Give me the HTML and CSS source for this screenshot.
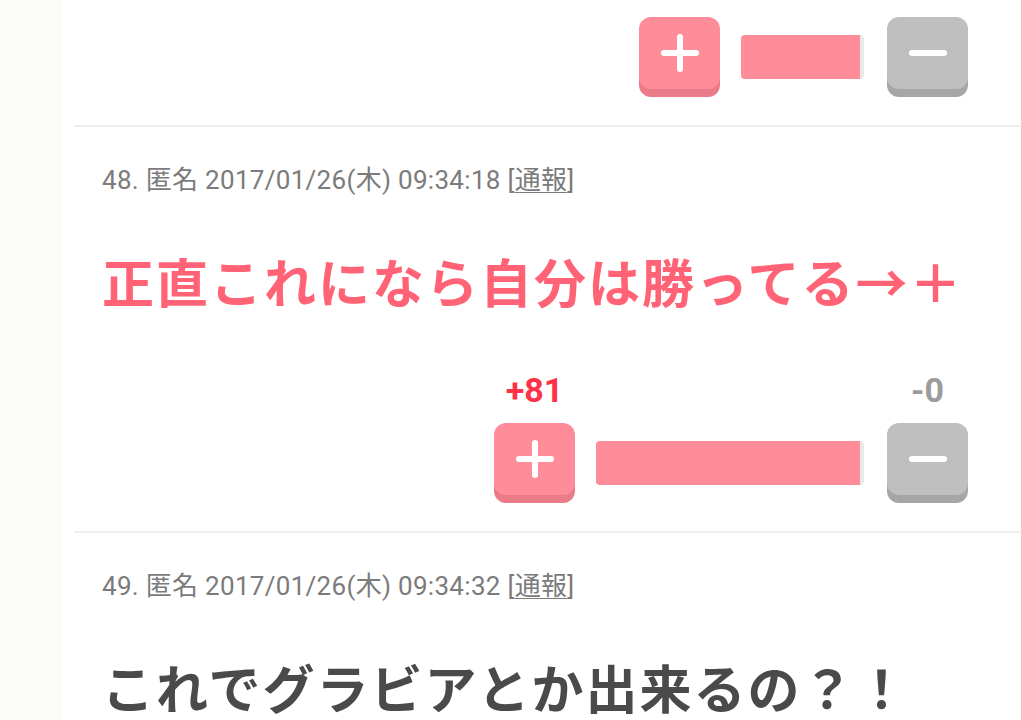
FILE: index.html
```html
<!DOCTYPE html>
<html lang="ja">
<head>
    <meta charset="UTF-8">
    <meta name="viewport" content="width=device-width, initial-scale=1.0">
    <link rel="stylesheet" href="styles.css">
</head>
<body>
    <div class="page">
        <div class="side"></div>
        <div class="main">

            <div class="res res-top">
                <div class="vote">
                    <div class="vote-col">
                        <button class="btn btn-plus"><span class="icon-plus"></span></button>
                    </div>
                    <div class="bar" style="width: 123px;"><div class="bar-fill"></div></div>
                    <div class="vote-col">
                        <button class="btn btn-minus"><span class="icon-minus"></span></button>
                    </div>
                </div>
            </div>

            <div class="res">
                <p class="meta">48. 匿名 2017/01/26(木) 09:34:18 [<span class="report">通報</span>]</p>
                <p class="body body-pink">正直これになら自分は勝ってる→＋</p>
                <div class="vote">
                    <div class="vote-col">
                        <span class="count count-plus">+81</span>
                        <button class="btn btn-plus"><span class="icon-plus"></span></button>
                    </div>
                    <div class="bar" style="width: 268px;"><div class="bar-fill"></div></div>
                    <div class="vote-col">
                        <span class="count count-minus">-0</span>
                        <button class="btn btn-minus"><span class="icon-minus"></span></button>
                    </div>
                </div>
            </div>

            <div class="res">
                <p class="meta">49. 匿名 2017/01/26(木) 09:34:32 [<span class="report">通報</span>]</p>
                <p class="body">これでグラビアとか出来るの？！</p>
            </div>

        </div>
    </div>
</body>
</html>
```

FILE: styles.css
```css
html, body {
    margin: 0;
    padding: 0;
    background: #ffffff;
    overflow: hidden;
}
.page {
    display: flex;
    min-height: 720px;
    font-family: Roboto, 'Noto Sans CJK JP', sans-serif;
}
.side {
    width: 62px;
    flex-shrink: 0;
    background: #fcfcf9;
}
.main {
    flex: 1;
    padding-left: 12px;
}
.res {
    padding: 0 53px 36px 28px;
    border-bottom: 2px solid #efefef;
}
.res-top {
    padding-top: 17px;
}
.meta {
    margin: 0;
    padding-top: 38px;
    font-size: 26px;
    letter-spacing: 0.3px;
    line-height: 30px;
    color: #7b7b7b;
}
.report {
    text-decoration: underline;
    text-decoration-thickness: 1px;
    text-underline-offset: 3px;
}
.body {
    margin: 48px 0 0 0;
    font-family: 'Noto Sans CJK JP', sans-serif;
    font-weight: 700;
    font-size: 52px;
    letter-spacing: 2px;
    line-height: 76px;
    white-space: nowrap;
    color: #4a4a4a;
}
.body-pink {
    color: #ff6375;
}
.vote {
    display: flex;
    justify-content: flex-end;
    align-items: flex-end;
    margin-top: 51px;
}
.res-top .vote {
    margin-top: 0;
}
.vote-col {
    display: flex;
    flex-direction: column;
    align-items: center;
}
.count {
    font-weight: 700;
    font-size: 34px;
    line-height: 40px;
    margin-bottom: 13px;
}
.count-plus {
    color: #ff3147;
}
.count-minus {
    color: #9c9c9c;
}
.btn {
    position: relative;
    width: 81px;
    height: 72px;
    border: none;
    border-radius: 12px;
    padding: 0;
    cursor: pointer;
}
.btn-plus {
    background: #ff8c99;
    box-shadow: 0 8px 0 #e97c88;
}
.btn-minus {
    background: #bfbfbf;
    box-shadow: 0 8px 0 #a6a6a6;
}
.icon-plus, .icon-minus {
    position: absolute;
    left: 50%;
    top: 50%;
    width: 38px;
    height: 6px;
    margin: -3px 0 0 -19px;
    background: #ffffff;
    border-radius: 3px;
}
.icon-plus::after {
    content: "";
    position: absolute;
    left: 16px;
    top: -16px;
    width: 6px;
    height: 38px;
    background: #ffffff;
    border-radius: 3px;
}
.bar {
    height: 44px;
    margin: 0 23px 10px 21px;
    background: #e9e9e9;
    border-radius: 4px;
    overflow: hidden;
}
.bar-fill {
    height: 100%;
    width: calc(100% - 4px);
    background: #ff8c99;
}
```
